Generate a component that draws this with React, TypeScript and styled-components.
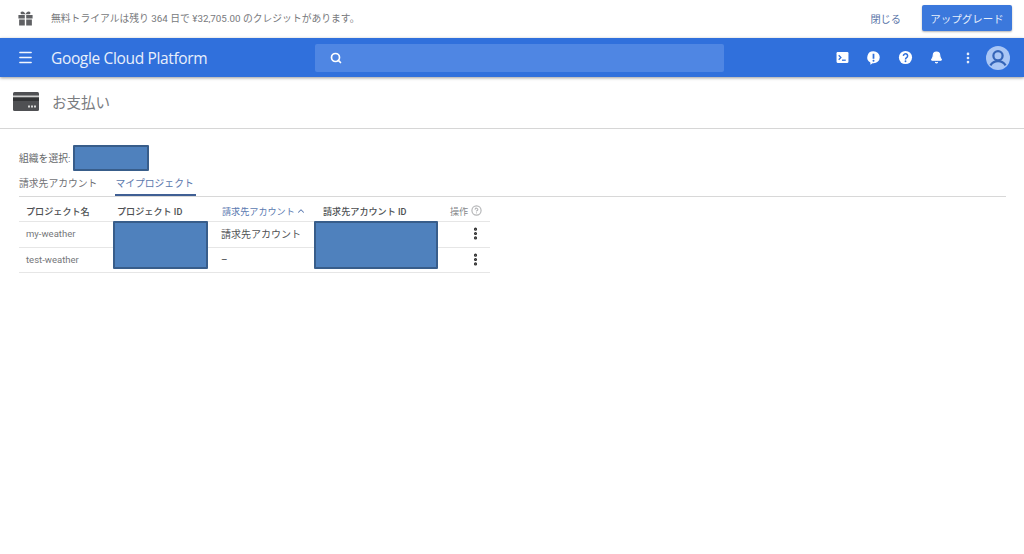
import styled, { createGlobalStyle } from 'styled-components';
import { Menu, Search, HelpCircle, Bell, MoreVertical, ChevronUp } from 'lucide-react';

const GlobalStyle = createGlobalStyle`
  html, body { margin: 0; padding: 0; background: #fff; }
  body {
    font-family: "Roboto", "Noto Sans CJK JP", sans-serif;
    color: #3c4043;
  }
`;

const Page = styled.div`
  width: 1024px;
  height: 554px;
  overflow: hidden;
  background: #fff;
`;

const Banner = styled.div`
  height: 38px;
  display: flex;
  align-items: center;
  padding: 0 12px 2px 17px;
  box-sizing: border-box;
`;

const BannerIcon = styled.svg`
  width: 17px;
  height: 17px;
  margin-right: 17px;
  fill: #5f6063;
`;

const BannerText = styled.span`
  flex: 1;
  font-size: 9.8px;
  color: #77797c;
`;

const CloseLink = styled.span`
  font-size: 10.2px;
  color: #5a74a8;
  margin-right: 21px;
`;

const UpgradeButton = styled.button`
  width: 90px;
  height: 26px;
  border: 0;
  border-radius: 2px;
  background: #3b78dc;
  color: #e6eefb;
  font: inherit;
  font-size: 10.5px;
  box-shadow: 0 1px 2px rgba(0, 0, 0, 0.3);
  padding: 0;
`;

const Header = styled.header`
  height: 39px;
  display: flex;
  align-items: center;
  background: #3070dc;
  box-shadow: 0 1px 3px rgba(0, 0, 0, 0.4);
  padding: 0 14px 0 17px;
  color: #fff;
`;

const Logo = styled.span`
  width: 264px;
  margin-left: 17px;
  font-family: "Open Sans", sans-serif;
  font-size: 15.5px;
  letter-spacing: -0.35px;
  color: #e8effb;
`;

const SearchBox = styled.div`
  width: 409px;
  height: 28px;
  display: flex;
  align-items: center;
  padding-left: 15px;
  box-sizing: border-box;
  background: #4f86e3;
  border-radius: 2px;
`;

const HeaderActions = styled.div`
  margin-left: auto;
  display: flex;
  align-items: center;
`;

const ActionSlot = styled.span`
  width: 31.5px;
  display: flex;
  justify-content: center;
  align-items: center;
`;

const Avatar = styled.svg`
  width: 24px;
  height: 24px;
  margin-left: 2px;
`;

const TitleBar = styled.div`
  height: 52px;
  display: flex;
  align-items: center;
  padding: 0 0 2px 13px;
  box-sizing: border-box;
  border-bottom: 1px solid #d6d6d6;
`;

const TitleText = styled.h1`
  margin: 0 0 0 13px;
  font-size: 14.5px;
  font-weight: 400;
  color: #7a7c80;
`;

const Content = styled.main`
  padding: 15px 0 0 19px;
  width: 1006px;
  box-sizing: border-box;
`;

const OrgRow = styled.div`
  height: 27px;
  display: flex;
  align-items: center;
  font-size: 9.8px;
  color: #66686b;
`;

const OrgMask = styled.span`
  width: 76px;
  height: 26px;
  margin-left: 3px;
  box-sizing: border-box;
  background: #4f81bd;
  border: 2.5px solid #385d8a;
  border-radius: 1px;
`;

const Tabs = styled.div`
  margin-top: 4px;
  height: 21px;
  display: flex;
  gap: 16px;
  border-bottom: 1px solid #d8d8d8;
`;

const Tab = styled.span<{ $active?: boolean }>`
  font-size: 9.8px;
  line-height: 14px;
  padding: 2px 2px 0 0;
  box-sizing: border-box;
  height: 21px;
  color: ${({ $active }) => ($active ? '#5b78ad' : '#6f7175')};
  border-bottom: 2px solid ${({ $active }) => ($active ? '#3f5f94' : 'transparent')};
`;

const TableWrap = styled.div`
  position: relative;
  width: 471px;
`;

const Table = styled.div`
  font-size: 9.1px;
`;

const Row = styled.div<{ $head?: boolean }>`
  height: ${({ $head }) => ($head ? '25px' : '25.5px')};
  display: grid;
  grid-template-columns: 91px 105px 101px 127px 47px;
  align-items: center;
  padding: ${({ $head }) => ($head ? '3px 0 0' : '0 0 1px')};
  border-bottom: 1px solid #e6e6e6;
  box-sizing: border-box;
`;

const HeadCell = styled.span<{ $sorted?: boolean; $muted?: boolean }>`
  display: flex;
  align-items: center;
  gap: ${({ $sorted }) => ($sorted ? '1px' : '3px')};
  padding-left: 7px;
  font-size: 9.1px;
  font-weight: ${({ $sorted, $muted }) => ($sorted || $muted ? 400 : 500)};
  color: ${({ $sorted, $muted }) => ($sorted ? '#5a79b0' : $muted ? '#85878a' : '#4d4f52')};
`;

const NameCell = styled.span`
  padding-left: 7px;
  font-size: 9.5px;
  color: #75777a;
`;

const ValueCell = styled.span`
  padding-left: 6px;
  font-size: 10px;
  color: #505255;
`;

const MenuCell = styled.span`
  display: flex;
  justify-content: flex-end;
  padding-right: 7px;
  color: #2b2b2b;
`;

const Mask = styled.div<{ $left: number; $width: number }>`
  position: absolute;
  top: 24px;
  left: ${({ $left }) => $left}px;
  width: ${({ $width }) => $width}px;
  height: 48px;
  box-sizing: border-box;
  background: #4f81bd;
  border: 2.5px solid #385d8a;
  border-radius: 1px;
`;

const projects = [
  { name: 'my-weather', account: '請求先アカウント' },
  { name: 'test-weather', account: '–' },
];

export default function App() {
  return (
    <Page>
      <GlobalStyle />
      <Banner>
        <BannerIcon viewBox="0 0 24 24">
          <path d="M2 7h9v5H2zM13 7h9v5h-9zM3 13.5h8V22H3zM13 13.5h8V22h-8z" />
          <path d="M7.5 2C9.6 2 11 3.6 12 6c1-2.4 2.4-4 4.5-4C18.4 2 19 3.3 19 4.2 19 5.4 18 6 16.5 6h-9C6 6 5 5.4 5 4.2 5 3.3 5.6 2 7.5 2z" />
        </BannerIcon>
        <BannerText>無料トライアルは残り 364 日で ¥32,705.00 のクレジットがあります。</BannerText>
        <CloseLink>閉じる</CloseLink>
        <UpgradeButton>アップグレード</UpgradeButton>
      </Banner>

      <Header>
        <Menu size={17} strokeWidth={2} color="#f2f6fd" />
        <Logo>Google Cloud Platform</Logo>
        <SearchBox>
          <Search size={12} strokeWidth={3.4} color="#fff" />
        </SearchBox>
        <HeaderActions>
          <ActionSlot>
            <svg width="13" height="13" viewBox="0 0 24 24">
              <rect x="1" y="2" width="22" height="20" rx="2" fill="#fff" />
              <path d="M5 8l4 4-4 4" stroke="#3070dc" strokeWidth="2.4" fill="none" />
              <path d="M11 17h7" stroke="#3070dc" strokeWidth="2.4" />
            </svg>
          </ActionSlot>
          <ActionSlot>
            <svg width="15" height="15" viewBox="0 0 24 24">
              <path d="M12 2a10 9.6 0 0 1 0 19.2h-1.5L7 23.5V20A9.6 9.6 0 0 1 12 2z" fill="#fff" />
              <path d="M12 6v8" stroke="#3070dc" strokeWidth="2.8" />
              <circle cx="12" cy="17" r="1.6" fill="#3070dc" />
            </svg>
          </ActionSlot>
          <ActionSlot>
            <svg width="15" height="15" viewBox="0 0 24 24">
              <circle cx="12" cy="12" r="10.5" fill="#fff" />
              <path d="M8.6 9.4a3.4 3.4 0 1 1 5.2 2.9c-1.2.8-1.8 1.4-1.8 2.9" stroke="#3070dc" strokeWidth="2.4" fill="none" />
              <circle cx="12" cy="18" r="1.5" fill="#3070dc" />
            </svg>
          </ActionSlot>
          <ActionSlot>
            <Bell size={13} fill="#fff" color="#fff" />
          </ActionSlot>
          <ActionSlot>
            <MoreVertical size={14} strokeWidth={2.6} color="#e8effb" />
          </ActionSlot>
          <Avatar viewBox="0 0 26 26">
            <circle cx="13" cy="13" r="13" fill="#a9c6f5" />
            <circle cx="13" cy="10.5" r="5" fill="none" stroke="#3565b8" strokeWidth="2.4" />
            <path d="M4.8 21c2-3.4 5-4.6 8.2-4.6s6.2 1.2 8.2 4.6" fill="none" stroke="#3565b8" strokeWidth="2.4" />
          </Avatar>
        </HeaderActions>
      </Header>

      <TitleBar>
        <svg width="26" height="19" viewBox="0 0 26 19">
          <rect width="26" height="19" rx="1.5" fill="#4f5053" />
          <rect y="3.5" width="26" height="2" fill="#d0d0d0" />
          <rect y="5.5" width="26" height="3.5" fill="#333436" />
          <rect x="15" y="13.5" width="2" height="2" fill="#d8d8d8" />
          <rect x="18" y="13.5" width="2" height="2" fill="#d8d8d8" />
          <rect x="21" y="13.5" width="2" height="2" fill="#d8d8d8" />
        </svg>
        <TitleText>お支払い</TitleText>
      </TitleBar>

      <Content>
        <OrgRow>
          組織を選択:
          <OrgMask />
        </OrgRow>
        <Tabs>
          <Tab>請求先アカウント</Tab>
          <Tab $active>マイプロジェクト</Tab>
        </Tabs>
        <TableWrap>
          <Table>
            <Row $head>
              <HeadCell>プロジェクト名</HeadCell>
              <HeadCell>プロジェクト ID</HeadCell>
              <HeadCell $sorted>
                請求先アカウント <ChevronUp size={10} strokeWidth={2.5} />
              </HeadCell>
              <HeadCell>請求先アカウント ID</HeadCell>
              <HeadCell $muted>
                操作 <HelpCircle size={11} color="#b5b6b8" strokeWidth={2.6} />
              </HeadCell>
            </Row>
            {projects.map(project => (
              <Row key={project.name}>
                <NameCell>{project.name}</NameCell>
                <span />
                <ValueCell>{project.account}</ValueCell>
                <span />
                <MenuCell>
                  <MoreVertical size={15} strokeWidth={3} />
                </MenuCell>
              </Row>
            ))}
          </Table>
          <Mask $left={94} $width={95} />
          <Mask $left={295} $width={124} />
        </TableWrap>
      </Content>
    </Page>
  );
}
